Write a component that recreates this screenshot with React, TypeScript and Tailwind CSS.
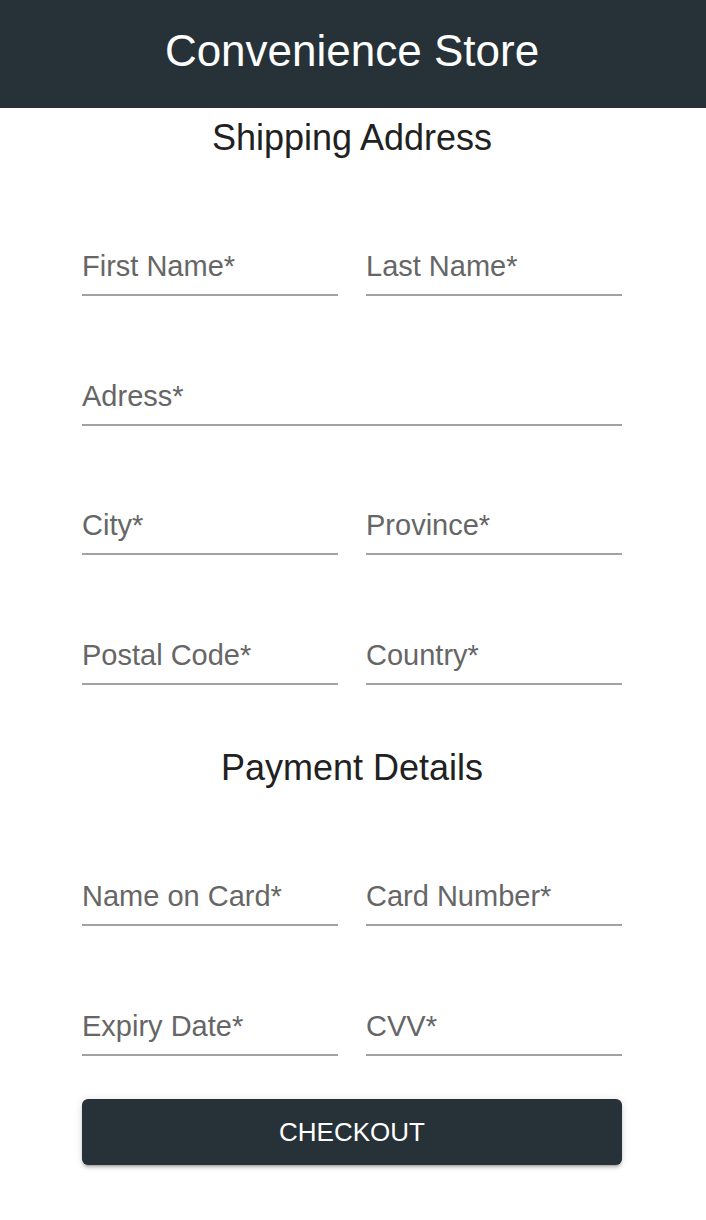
import React from "react";

const font = { fontFamily: '"Liberation Sans", Arial, Helvetica, sans-serif' };

function Field({ label }: { label: string }) {
  return (
    <div className="flex flex-col">
      <div className="h-[29px] text-[29px] leading-[29px] text-[#666666] whitespace-nowrap">{label}</div>
      <div className="mt-[13px] h-[2px] bg-[#a2a2a2]" />
    </div>
  );
}

function Row({ children, className }: { children: React.ReactNode; className: string }) {
  return <div className={`grid grid-cols-2 gap-x-[28px] ${className}`}>{children}</div>;
}

export default function App() {
  return (
    <div className="min-h-[1220px] bg-white" style={font}>
      <header className="flex h-[108px] items-center justify-center bg-[#263238] pb-[7px] pr-[2px]">
        <h1 className="text-[44px] leading-none text-white">Convenience Store</h1>
      </header>
      <div className="ml-[82px] w-[540px]">
        <h2 className="mt-[12px] h-[36px] text-center text-[36px] leading-[36px] text-[#212121]">Shipping Address</h2>
        <Row className="mt-[96px]">
          <Field label="First Name*" />
          <Field label="Last Name*" />
        </Row>
        <div className="mt-[86px]">
          <Field label="Adress*" />
        </div>
        <Row className="mt-[85px]">
          <Field label="City*" />
          <Field label="Province*" />
        </Row>
        <Row className="mt-[86px]">
          <Field label="Postal Code*" />
          <Field label="Country*" />
        </Row>
        <h2 className="mt-[65px] h-[36px] text-center text-[36px] leading-[36px] text-[#212121]">Payment Details</h2>
        <Row className="mt-[96px]">
          <Field label="Name on Card*" />
          <Field label="Card Number*" />
        </Row>
        <Row className="mt-[86px]">
          <Field label="Expiry Date*" />
          <Field label="CVV*" />
        </Row>
        <button className="mt-[43px] flex h-[66px] w-full items-center justify-center rounded-[6px] bg-[#263238] text-[26px] leading-none text-white shadow-[0_4px_2px_-3px_rgba(0,0,0,0.2),0_3px_3px_0_rgba(0,0,0,0.14),0_1px_8px_0_rgba(0,0,0,0.12)]">
          CHECKOUT
        </button>
      </div>
    </div>
  );
}
